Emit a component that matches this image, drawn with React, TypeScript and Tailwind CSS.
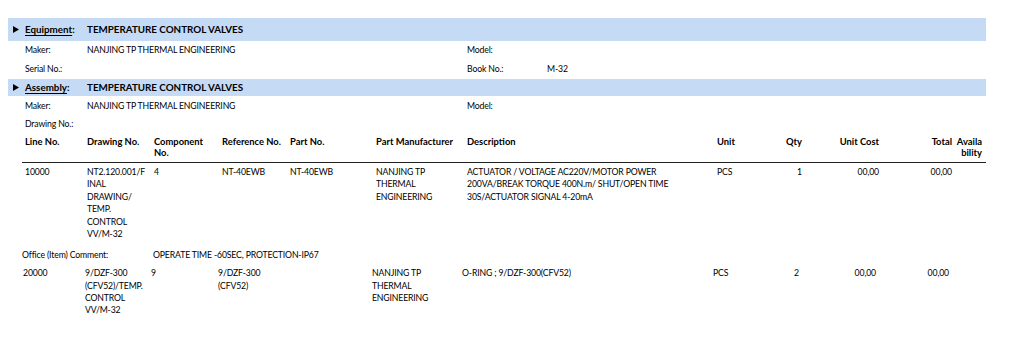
import React from "react";

const Tri = () => (
  <svg width="6" height="7" viewBox="0 0 6 7" className="shrink-0">
    <path d="M0 0 L6 3.5 L0 7 Z" fill="#000" />
  </svg>
);

const Cell = ({ w, lines, right }: { w: string; lines: string[]; right?: boolean }) => (
  <div className={`${w} shrink-0 ${right ? "text-right" : ""}`}>
    {lines.map((l, i) => (
      <div key={i} className="whitespace-nowrap">{l || "\u00a0"}</div>
    ))}
  </div>
);

export default function App() {
  return (
    <div
      className="w-[1024px] h-[350px] bg-white text-[#000] text-[8.7px] tracking-[-0.15px] pt-[18px] pl-[8px]"
      style={{ fontFamily: "Lato, 'Liberation Sans', sans-serif" }}
    >
      <div className="w-[978px]">
        {/* Equipment bar */}
        <div className="h-[23px] bg-[#c5daf5] flex items-center pl-[5px] font-bold text-[9.8px] tracking-normal">
          <Tri />
          <span className="ml-[6px] w-[62px]">
            <span className="underline decoration-1 underline-offset-2">Equipment</span>:
          </span>
          <span>TEMPERATURE CONTROL VALVES</span>
        </div>
        <div className="h-[18px] flex items-center pl-[17px]">
          <span className="w-[62px]">Maker:</span>
          <span className="w-[380px]">NANJING TP THERMAL ENGINEERING</span>
          <span>Model:</span>
        </div>
        <div className="h-[20px] flex items-center pl-[17px]">
          <span className="w-[442px]">Serial No.:</span>
          <span className="w-[80px]">Book No.:</span>
          <span>M-32</span>
        </div>
        {/* Assembly bar */}
        <div className="h-[17px] bg-[#c5daf5] flex items-center pl-[5px] font-bold text-[9.8px] tracking-normal">
          <Tri />
          <span className="ml-[6px] w-[62px]">
            <span className="underline decoration-1 underline-offset-2">Assembly</span>:
          </span>
          <span>TEMPERATURE CONTROL VALVES</span>
        </div>
        <div className="h-[19px] flex items-center pl-[17px]">
          <span className="w-[62px]">Maker:</span>
          <span className="w-[380px]">NANJING TP THERMAL ENGINEERING</span>
          <span>Model:</span>
        </div>
        <div className="h-[17px] flex items-center pl-[17px]">
          <span>Drawing No.:</span>
        </div>

        {/* table */}
        <div className="ml-[14px] w-[964px]">
          <div className="flex pt-[4px] pb-[4px] leading-[11px] font-bold text-[9.4px] tracking-normal border-b-[1.5px] border-[#222] pl-[3px]">
            <Cell w="w-[62px]" lines={["Line No."]} />
            <Cell w="w-[67px]" lines={["Drawing No."]} />
            <Cell w="w-[68px]" lines={["Component", "No."]} />
            <Cell w="w-[68px]" lines={["Reference No."]} />
            <Cell w="w-[86px]" lines={["Part No."]} />
            <Cell w="w-[91px]" lines={["Part  Manufacturer"]} />
            <Cell w="w-[250px]" lines={["Description"]} />
            <Cell w="w-[43px]" lines={["Unit"]} />
            <Cell w="w-[42px]" lines={["Qty"]} right />
            <Cell w="w-[77px]" lines={["Unit Cost"]} right />
            <Cell w="w-[73px]" lines={["Total"]} right />
            <Cell w="w-[30px]" lines={["Availa", "bility"]} right />
          </div>

          <div className="flex pt-[3px] leading-[12.4px] pl-[3px]">
            <Cell w="w-[62px]" lines={["10000"]} />
            <Cell w="w-[67px]" lines={["NT2.120.001/F", "INAL", "DRAWING/", "TEMP.", "CONTROL", "VV/M-32"]} />
            <Cell w="w-[68px]" lines={["4"]} />
            <Cell w="w-[68px]" lines={["NT-40EWB"]} />
            <Cell w="w-[86px]" lines={["NT-40EWB"]} />
            <Cell w="w-[91px]" lines={["NANJING TP", "THERMAL", "ENGINEERING"]} />
            <Cell
              w="w-[250px]"
              lines={[
                "ACTUATOR / VOLTAGE AC220V/MOTOR POWER",
                "200VA/BREAK TORQUE 400N.m/ SHUT/OPEN TIME",
                "30S/ACTUATOR SIGNAL 4-20mA",
              ]}
            />
            <Cell w="w-[43px]" lines={["PCS"]} />
            <Cell w="w-[42px]" lines={["1"]} right />
            <Cell w="w-[77px]" lines={["00,00"]} right />
            <Cell w="w-[73px]" lines={["00,00"]} right />
          </div>

          <div className="flex h-[20px] items-end leading-[12px] mt-[1px]">
            <span className="w-[131px] shrink-0">Office (Item) Comment:</span>
            <span>OPERATE TIME -60SEC, PROTECTION-IP67</span>
          </div>

          <div className="flex pt-[6px] leading-[12.3px] pl-[1px]">
            <Cell w="w-[62px]" lines={["20000"]} />
            <Cell w="w-[66px]" lines={["9/DZF-300", "(CFV52)/TEMP.", "CONTROL", "VV/M-32"]} />
            <Cell w="w-[67px]" lines={["9"]} />
            <Cell w="w-[154px]" lines={["9/DZF-300", "(CFV52)"]} />
            <Cell w="w-[90px]" lines={["NANJING TP", "THERMAL", "ENGINEERING"]} />
            <Cell w="w-[251px]" lines={["O-RING ; 9/DZF-300(CFV52)"]} />
            <Cell w="w-[43px]" lines={["PCS"]} />
            <Cell w="w-[43px]" lines={["2"]} right />
            <Cell w="w-[77px]" lines={["00,00"]} right />
            <Cell w="w-[73px]" lines={["00,00"]} right />
          </div>
        </div>
      </div>
    </div>
  );
}
